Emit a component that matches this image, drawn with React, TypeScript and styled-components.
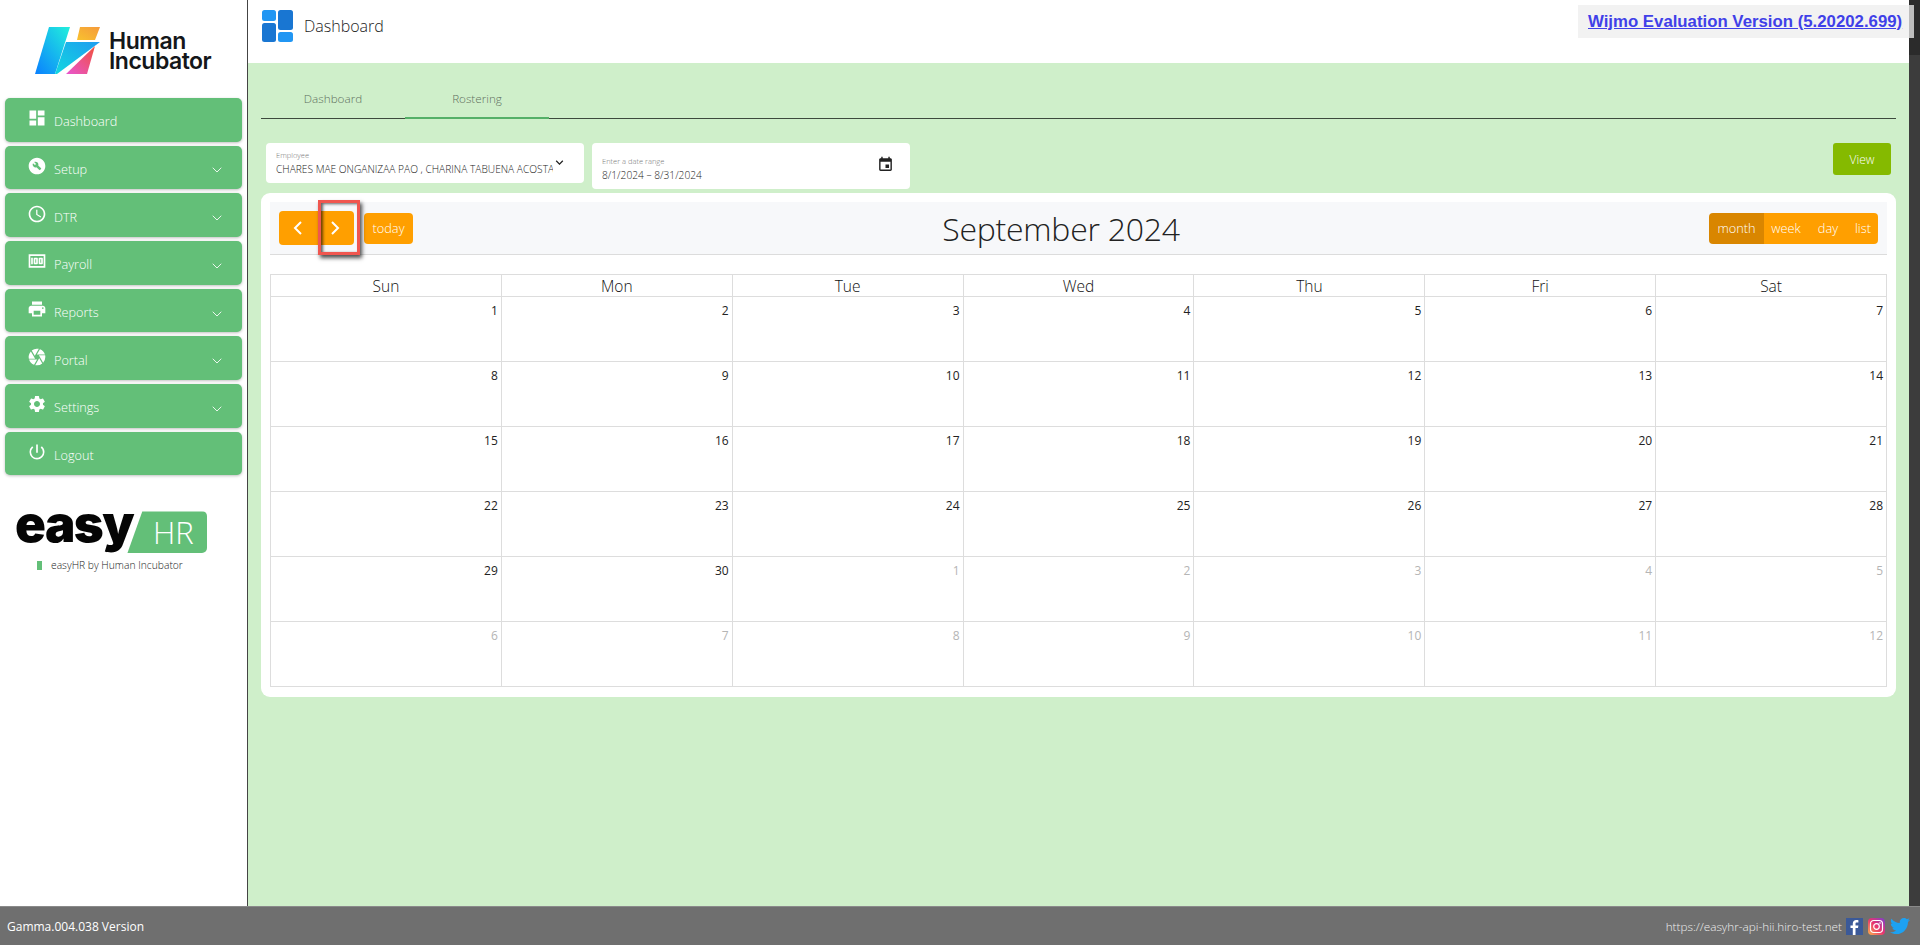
import React from 'react';
import styled, {createGlobalStyle} from 'styled-components';
import {ChevronDown} from 'lucide-react';
import {FaTwitter} from 'react-icons/fa';
import {
  MdBuildCircle,
  MdCamera,
  MdDashboard,
  MdEvent,
  MdKeyboardArrowDown,
  MdMoney,
  MdOutlineAccessTime,
  MdPowerSettingsNew,
  MdPrint,
  MdSettings,
} from 'react-icons/md';

const FONT = '"Open Sans", "Noto Sans", "Liberation Sans", sans-serif';

const GlobalStyle = createGlobalStyle`
  html, body {
    margin: 0;
    height: 100%;
    overflow: hidden;
    background: #fff;
    font-family: ${FONT};
  }
  * {
    box-sizing: border-box;
  }
`;

const Shell = styled.div`
  display: flex;
  flex-direction: column;
  width: 100vw;
  height: 100vh;
`;

const Body = styled.div`
  display: flex;
  flex: 1;
  min-height: 0;
`;

const Sidebar = styled.aside`
  display: flex;
  flex-direction: column;
  width: 248px;
  flex: none;
  background: #fff;
  border-right: 1px solid #444;
`;

const BrandRow = styled.div`
  display: flex;
  align-items: center;
  gap: 8px;
  height: 98px;
  padding: 27px 0 23px 35px;
`;

const BrandName = styled.div`
  font-family: "Inter", "Liberation Sans", sans-serif;
  font-size: 23px;
  font-weight: 600;
  line-height: 20px;
  letter-spacing: -0.5px;
  color: #14171a;
`;

const Menu = styled.nav`
  display: flex;
  flex-direction: column;
  gap: 4.1px;
  padding-left: 5px;
  width: 242px;
`;

const MenuItem = styled.div`
  display: flex;
  align-items: center;
  height: 43.6px;
  padding: 3px 17px 0 22px;
  background: #63bf78;
  border-radius: 5px;
  box-shadow: 0 1px 3px rgba(0, 0, 0, 0.25);
  color: #fff;
  font-size: 12.7px;
  font-weight: 300;
`;

const MenuIcon = styled.span`
  display: flex;
  justify-content: center;
  width: 20px;
  margin-right: 7px;
  margin-top: -6px;
  font-size: 22px;
`;

const MenuLabel = styled.span`
  flex: 1;
`;

const MenuChevron = styled(ChevronDown)`
  width: 16px;
  height: 16px;
  margin-top: 3px;
`;

const EasyLogo = styled.div`
  display: flex;
  align-items: flex-end;
  padding: 4px 0 0 15px;
  height: 78px;
`;

const EasyWord = styled.div`
  font-family: "Inter", "Liberation Sans", sans-serif;
  font-size: 51px;
  font-weight: 900;
  line-height: 48px;
  letter-spacing: -1.5px;
  color: #050505;
  margin-bottom: 5px;
`;

const HrBadge = styled.div`
  display: flex;
  align-items: center;
  justify-content: center;
  width: 80px;
  height: 42px;
  margin-left: -6px;
  padding-left: 12px;
  background: #63bf78;
  border-radius: 0 5px 5px 0;
  clip-path: polygon(15px 0, 100% 0, 100% 100%, 0 100%);
  color: #fff;
  font-size: 31px;
  font-weight: 300;
`;

const EasyCaption = styled.div`
  display: flex;
  align-items: center;
  gap: 9px;
  padding: 5px 0 0 37px;
  font-size: 10.3px;
  font-weight: 300;
  color: #222;
`;

const CaptionMark = styled.span`
  width: 5px;
  height: 9px;
  background: #63bf78;
`;

const Content = styled.main`
  display: flex;
  flex-direction: column;
  flex: 1;
  min-width: 0;
  position: relative;
`;

const Header = styled.header`
  display: flex;
  align-items: center;
  gap: 11px;
  height: 63px;
  flex: none;
  padding: 0 0 12px 14px;
  background: #fff;
  font-size: 16px;
  font-weight: 300;
  color: #222;
`;

const WijmoBanner = styled.div`
  position: absolute;
  top: 5px;
  right: -5px;
  width: 336px;
  height: 33px;
  display: flex;
  align-items: center;
  padding-left: 10px;
  background: #f2f2f2;
  border-right: 5px solid #bdbdbd;
`;

const WijmoLink = styled.a`
  font-family: "Liberation Sans", Arial, sans-serif;
  font-size: 16.8px;
  font-weight: 700;
  color: #4040e8;
  text-decoration: underline;
  white-space: nowrap;
`;

const Stage = styled.div`
  flex: 1;
  display: flex;
  flex-direction: column;
  padding: 22px 13px 0 13px;
  background: #cfefca;
`;

const Tabs = styled.div`
  display: flex;
  height: 34px;
  border-bottom: 1px solid #3d4a3d;
`;

const Tab = styled.div<{$active?: boolean}>`
  display: flex;
  align-items: center;
  justify-content: center;
  width: 144px;
  height: 34px;
  padding-bottom: 7px;
  font-size: 11.7px;
  font-weight: 300;
  color: #5f6f5f;
  border-bottom: 2px solid ${p => (p.$active ? '#55b068' : 'transparent')};
`;

const Filters = styled.div`
  display: flex;
  align-items: flex-start;
  gap: 8px;
  height: 74px;
  padding: 24px 5px 0 5px;
`;

const Field = styled.div<{$tall?: boolean}>`
  position: relative;
  display: flex;
  flex-direction: column;
  width: 318px;
  height: ${p => (p.$tall ? 46 : 40)}px;
  padding: ${p => (p.$tall ? 13 : 7)}px 31px 0 10px;
  background: #fff;
  border-radius: 4px;
`;

const FieldLabel = styled.div`
  font-size: 7.5px;
  font-weight: 300;
  line-height: 11px;
  color: #777;
`;

const FieldValue = styled.div`
  font-size: 10.2px;
  font-weight: 300;
  line-height: 16px;
  color: #222;
  white-space: nowrap;
  overflow: hidden;
`;

const FieldChevron = styled(MdKeyboardArrowDown)`
  position: absolute;
  top: 12px;
  right: 17px;
  font-size: 15px;
  color: #222;
`;

const FieldCalendar = styled(MdEvent)`
  position: absolute;
  top: 13px;
  right: 16px;
  font-size: 17px;
  color: #222;
`;

const ViewButton = styled.div`
  display: flex;
  align-items: center;
  justify-content: center;
  width: 58px;
  height: 32px;
  margin-left: auto;
  background: #85ba00;
  border-radius: 3px;
  color: #fff;
  font-size: 12px;
  font-weight: 300;
`;

const Card = styled.section`
  position: relative;
  height: 504px;
  padding: 9px 9px 0 9px;
  background: #fff;
  border-radius: 9px;
`;

const Toolbar = styled.div`
  display: flex;
  align-items: center;
  justify-content: space-between;
  height: 53px;
  padding: 0 9px;
  background: #f7f8fa;
  border-bottom: 1px solid #dcdcdc;
`;

const ToolGroup = styled.div`
  display: flex;
  align-items: center;
  gap: 10px;
`;

const NavPair = styled.div`
  display: flex;
  width: 75px;
  height: 34px;
  background: #ff9f00;
  border-radius: 4px;
`;

const NavButton = styled.div`
  display: flex;
  flex: 1;
  align-items: center;
  justify-content: center;
  color: #fff;
`;

const TextButton = styled.div<{$active?: boolean; $wide?: number}>`
  display: flex;
  align-items: center;
  justify-content: center;
  width: ${p => p.$wide ?? 49}px;
  height: 31px;
  background: ${p => (p.$active ? '#d98600' : '#ff9f00')};
  color: #fff;
  font-size: 12.8px;
  font-weight: 300;
`;

const TodayButton = styled(TextButton)`
  border-radius: 4px;
`;

const ViewSwitch = styled.div`
  display: flex;
  border-radius: 4px;
  overflow: hidden;
`;

const Title = styled.h2`
  margin: 0;
  font-size: 32px;
  font-weight: 300;
  color: #222;
  letter-spacing: -0.25px;
`;

const Calendar = styled.div`
  display: grid;
  grid-template-columns: repeat(7, 1fr);
  grid-template-rows: 22px repeat(6, 65px);
  margin-top: 19px;
  height: 413px;
  border-top: 1px solid #ddd;
  border-left: 1px solid #ddd;
`;

const DayHead = styled.div`
  display: flex;
  align-items: center;
  justify-content: center;
  padding-top: 1px;
  border-right: 1px solid #ddd;
  border-bottom: 1px solid #ddd;
  font-size: 15.5px;
  font-weight: 300;
  color: #111;
`;

const DayCell = styled.div<{$muted?: boolean}>`
  padding: 6px 3px 0 0;
  border-right: 1px solid #ddd;
  border-bottom: 1px solid #ddd;
  text-align: right;
  font-size: 12px;
  line-height: 16px;
  color: ${p => (p.$muted ? '#b5b5b5' : '#222')};
`;

const Highlight = styled.div`
  position: absolute;
  left: 57px;
  top: 7px;
  width: 42px;
  height: 55px;
  border: 3px solid #f0564f;
  box-shadow: 2px 3px 4px rgba(0, 0, 0, 0.7), inset 2px 1px 3px rgba(0, 0, 0, 0.6);
`;

const ScrollTrack = styled.div`
  width: 11px;
  flex: none;
  background: linear-gradient(#2b2b2b 55px, #3c3c3c 55px);
`;

const Footer = styled.footer`
  display: flex;
  align-items: center;
  justify-content: space-between;
  height: 39px;
  flex: none;
  padding: 0 10px 0 7px;
  background: #6f6f6f;
  border-top: 1px solid #8a8a8a;
  color: #fff;
  font-size: 12px;
`;

const FooterLinks = styled.div`
  display: flex;
  align-items: center;
  gap: 4px;
  font-size: 11.75px;
  color: #eee;
  font-weight: 300;
`;

const Socials = styled.div`
  display: flex;
  align-items: center;
  gap: 5px;
`;

const TwitterIcon = styled(FaTwitter)`
  font-size: 20px;
  color: #1da1f2;
`;

const DAYS = ['Sun', 'Mon', 'Tue', 'Wed', 'Thu', 'Fri', 'Sat'];

const MENU = [
  {label: 'Dashboard', icon: <MdDashboard />},
  {label: 'Setup', icon: <MdBuildCircle />, more: true},
  {label: 'DTR', icon: <MdOutlineAccessTime />, more: true},
  {label: 'Payroll', icon: <MdMoney />, more: true},
  {label: 'Reports', icon: <MdPrint />, more: true},
  {label: 'Portal', icon: <MdCamera />, more: true},
  {label: 'Settings', icon: <MdSettings />, more: true},
  {label: 'Logout', icon: <MdPowerSettingsNew />},
];

const CELLS = [
  ...Array.from({length: 30}, (_, i) => ({day: i + 1, muted: false})),
  ...Array.from({length: 12}, (_, i) => ({day: i + 1, muted: true})),
];

function BrandMark() {
  return (
    <svg width="66" height="48" viewBox="0 0 66 48">
      <defs>
        <linearGradient id="left" x1="0" y1="1" x2="1" y2="0">
          <stop offset="0" stopColor="#0a80ff" />
          <stop offset="1" stopColor="#22f0dc" />
        </linearGradient>
        <linearGradient id="bar" x1="0" y1="1" x2="1" y2="0">
          <stop offset="0" stopColor="#12d8e0" />
          <stop offset="1" stopColor="#1e9cf0" />
        </linearGradient>
        <linearGradient id="low" x1="0" y1="1" x2="1" y2="0">
          <stop offset="0" stopColor="#e856d0" />
          <stop offset="1" stopColor="#f0503c" />
        </linearGradient>
        <linearGradient id="top" x1="0" y1="1" x2="1" y2="0">
          <stop offset="0" stopColor="#f9c22e" />
          <stop offset="1" stopColor="#f59a3c" />
        </linearGradient>
      </defs>
      <path d="M14 0H35L20 47H0Z" fill="url(#left)" />
      <path d="M20 47L31 15H65L22 47Z" fill="url(#bar)" />
      <path d="M45 0H65L60 13H42Z" fill="url(#top)" />
      <path d="M31 47L60 19L52 47Z" fill="url(#low)" />
    </svg>
  );
}

function HeaderMark() {
  return (
    <svg width="31" height="32" viewBox="0 0 31 32">
      <rect x="0" y="0" width="14" height="11" rx="2.5" fill="#2196f3" />
      <rect x="0" y="13" width="14" height="19" rx="2.5" fill="#1976d2" />
      <rect x="16" y="0" width="15" height="20" rx="2.5" fill="#1976d2" />
      <rect x="16" y="22" width="15" height="10" rx="2.5" fill="#2196f3" />
    </svg>
  );
}

function FacebookMark() {
  return (
    <svg width="17" height="17" viewBox="0 0 17 17">
      <rect width="17" height="17" fill="#3b5998" />
      <path d="M9.5 17V10H12L12.4 7.4H9.5V5.8C9.5 5 9.8 4.5 10.9 4.5H12.4V2.2C12 2.1 11.2 2 10.3 2C8.2 2 6.8 3.3 6.8 5.5V7.4H4.5V10H6.8V17Z" fill="#fff" />
    </svg>
  );
}

function InstagramMark() {
  return (
    <svg width="17" height="17" viewBox="0 0 17 17">
      <defs>
        <linearGradient id="insta" x1="0" y1="1" x2="1" y2="0">
          <stop offset="0" stopColor="#fdb44b" />
          <stop offset="0.5" stopColor="#e8336e" />
          <stop offset="1" stopColor="#7a3fd0" />
        </linearGradient>
      </defs>
      <rect width="17" height="17" rx="4" fill="url(#insta)" />
      <rect x="2.5" y="2.5" width="12" height="12" rx="3.2" fill="none" stroke="#fff" strokeWidth="1.2" />
      <circle cx="8.5" cy="8.5" r="2.8" fill="none" stroke="#fff" strokeWidth="1.2" />
      <circle cx="12" cy="5" r="0.8" fill="#fff" />
    </svg>
  );
}

function Chevron({left}: {left?: boolean}) {
  return (
    <svg width="10" height="16" viewBox="0 0 10 16">
      <path
        d={left ? 'M8 2L2 8L8 14' : 'M2 2L8 8L2 14'}
        fill="none"
        stroke="#fff"
        strokeWidth="2"
      />
    </svg>
  );
}

export default function App() {
  return (
    <Shell>
      <GlobalStyle />
      <Body>
        <Sidebar>
          <BrandRow>
            <BrandMark />
            <BrandName>
              Human
              <br />
              Incubator
            </BrandName>
          </BrandRow>
          <Menu>
            {MENU.map(item => (
              <MenuItem key={item.label}>
                <MenuIcon>{item.icon}</MenuIcon>
                <MenuLabel>{item.label}</MenuLabel>
                {item.more && <MenuChevron strokeWidth={1.3} />}
              </MenuItem>
            ))}
          </Menu>
          <EasyLogo>
            <EasyWord>easy</EasyWord>
            <HrBadge>HR</HrBadge>
          </EasyLogo>
          <EasyCaption>
            <CaptionMark />
            easyHR by Human Incubator
          </EasyCaption>
        </Sidebar>
        <Content>
          <Header>
            <HeaderMark />
            Dashboard
          </Header>
          <WijmoBanner>
            <WijmoLink>Wijmo Evaluation Version (5.20202.699)</WijmoLink>
          </WijmoBanner>
          <Stage>
            <Tabs>
              <Tab>Dashboard</Tab>
              <Tab $active>Rostering</Tab>
            </Tabs>
            <Filters>
              <Field>
                <FieldLabel>Employee</FieldLabel>
                <FieldValue>CHARES MAE ONGANIZAA PAO , CHARINA TABUENA ACOSTA</FieldValue>
                <FieldChevron />
              </Field>
              <Field $tall>
                <FieldLabel>Enter a date range</FieldLabel>
                <FieldValue>8/1/2024 – 8/31/2024</FieldValue>
                <FieldCalendar />
              </Field>
              <ViewButton>View</ViewButton>
            </Filters>
            <Card>
              <Toolbar>
                <ToolGroup>
                  <NavPair>
                    <NavButton>
                      <Chevron left />
                    </NavButton>
                    <NavButton>
                      <Chevron />
                    </NavButton>
                  </NavPair>
                  <TodayButton>today</TodayButton>
                </ToolGroup>
                <Title>September 2024</Title>
                <ViewSwitch>
                  <TextButton $active $wide={55}>month</TextButton>
                  <TextButton $wide={44}>week</TextButton>
                  <TextButton $wide={40}>day</TextButton>
                  <TextButton $wide={30}>list</TextButton>
                </ViewSwitch>
              </Toolbar>
              <Calendar>
                {DAYS.map(day => (
                  <DayHead key={day}>{day}</DayHead>
                ))}
                {CELLS.map((cell, index) => (
                  <DayCell key={index} $muted={cell.muted}>
                    {cell.day}
                  </DayCell>
                ))}
              </Calendar>
              <Highlight />
            </Card>
          </Stage>
        </Content>
        <ScrollTrack />
      </Body>
      <Footer>
        <span>Gamma.004.038 Version</span>
        <FooterLinks>
          https://easyhr-api-hii.hiro-test.net
          <Socials>
            <FacebookMark />
            <InstagramMark />
            <TwitterIcon />
          </Socials>
        </FooterLinks>
      </Footer>
    </Shell>
  );
}
